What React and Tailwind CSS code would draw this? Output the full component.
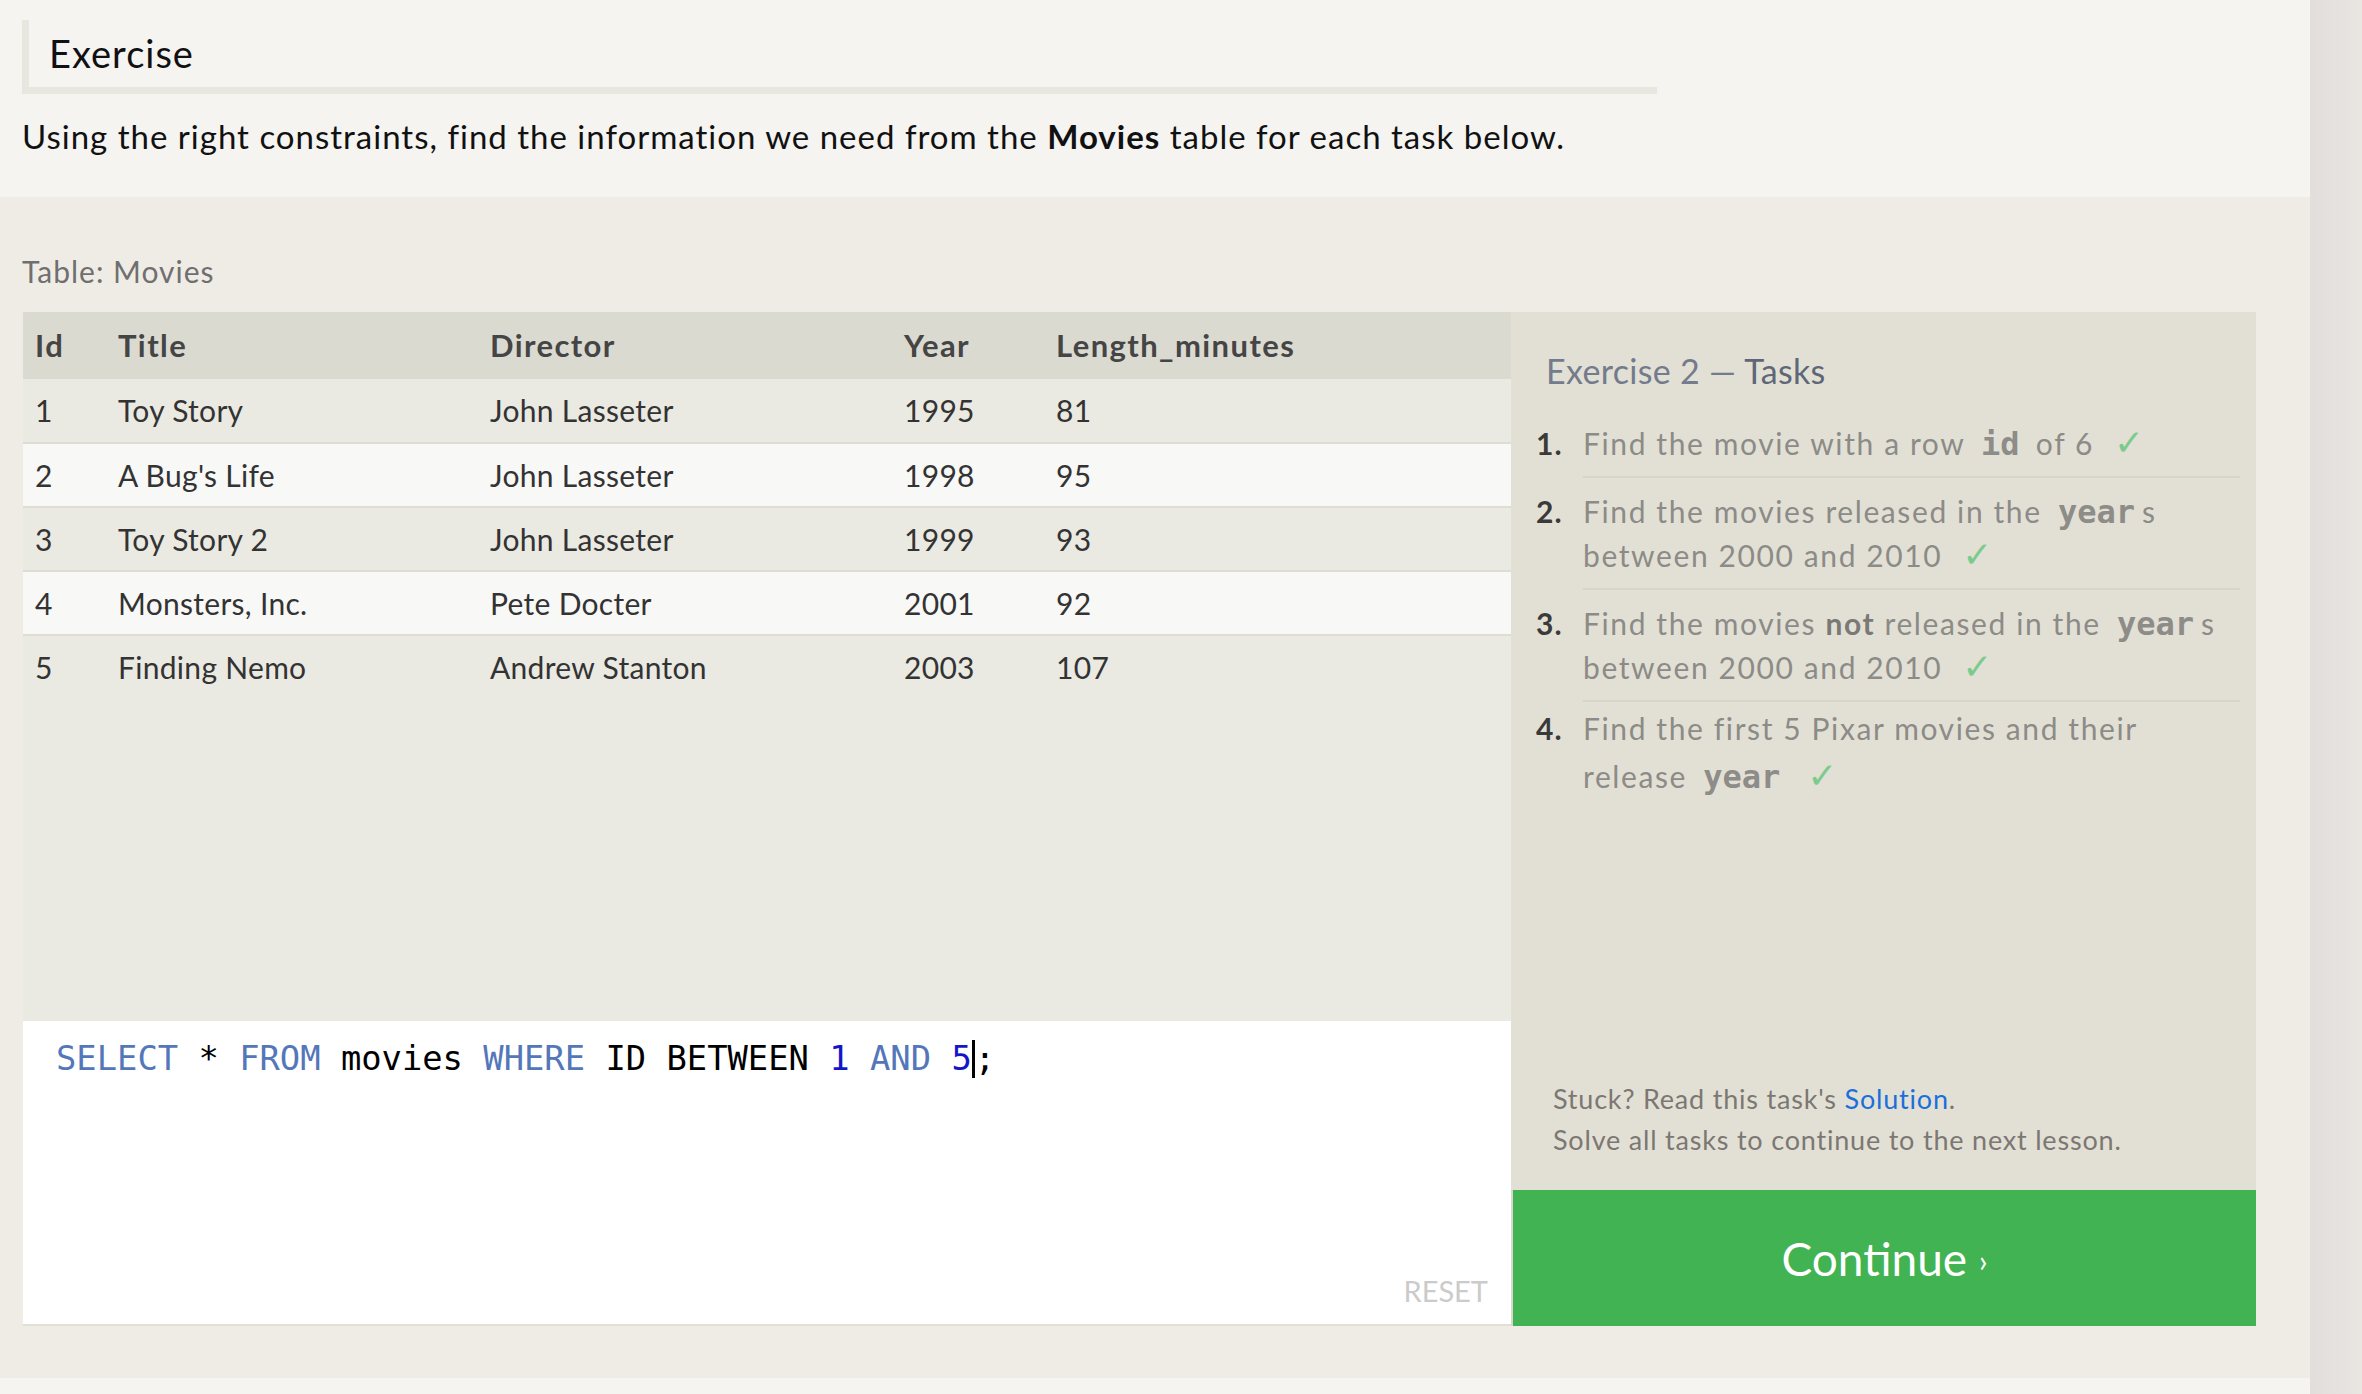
import React from "react";

const rows = [
  ["1", "Toy Story", "John Lasseter", "1995", "81"],
  ["2", "A Bug's Life", "John Lasseter", "1998", "95"],
  ["3", "Toy Story 2", "John Lasseter", "1999", "93"],
  ["4", "Monsters, Inc.", "Pete Docter", "2001", "92"],
  ["5", "Finding Nemo", "Andrew Stanton", "2003", "107"],
];

function Code({ children }) {
  return (
    <span className="font-[family-name:'DejaVu_Sans_Mono',monospace] font-bold text-[32px] leading-none tracking-normal text-[#8d8c88] px-[7px]">
      {children}
    </span>
  );
}

function Check() {
  return (
    <span className="text-[#7ccb8d] ml-[20px] font-[family-name:'DejaVu_Sans',sans-serif] text-[36px] leading-none tracking-normal">
      ✓
    </span>
  );
}

function Task({ n, children }) {
  return (
    <li className="flex">
      <span className="w-[47px] shrink-0 py-[11px] leading-[44px] text-[#3a3a3a] font-bold tracking-[1.2px]">{n}.</span>
      <div className="flex-1 py-[11px] leading-[44px] text-[#8c8b87] border-b-2 border-[#d7d5ca]">{children}</div>
    </li>
  );
}

const cols = "grid grid-cols-[83px_372px_414px_152px_1fr] pl-[12px] items-center";

export default function App() {
  return (
    <div className="min-h-screen flex bg-[#e6e2df] font-[family-name:Lato,sans-serif]">
      <div className="w-[2310px] flex flex-col">
        <header className="bg-[#f5f4f1] h-[197px] pl-[22px] pt-[20px]">
          <div className="w-[1635px] h-[74px] border-l-[7px] border-b-[7px] border-[#e8e7df] flex items-center pl-[20px] text-[38px] tracking-[1px] text-[#111]">
            Exercise
          </div>
          <p className="mt-[22px] text-[33px] tracking-[1px] leading-[40px] text-[#111]">
            Using the right constraints, find the information we need from the <b>Movies</b> table for each task below.
          </p>
        </header>

        <main className="bg-[#efece6] h-[1181px] pl-[22px] pt-[54px]">
          <div className="text-[30px] tracking-[1px] leading-[40px] text-[#6f6f6f]">Table: Movies</div>
          <div className="mt-[21px] ml-[1px] flex w-[2233px]">
            <div className="w-[1488px] flex flex-col">
              <div className="h-[709px] bg-[#eae9e2] flex flex-col text-[30px] tracking-[0.3px] text-[#333]">
                <div className={cols + " h-[67px] bg-[#dbdad0] font-bold text-[31px] tracking-[1.4px] text-[#454545]"}>
                  <span>Id</span>
                  <span>Title</span>
                  <span>Director</span>
                  <span>Year</span>
                  <span>Length_minutes</span>
                </div>
                {rows.map((r, i) => (
                  <div
                    key={i}
                    className={
                      cols +
                      " " +
                      (i === 0 ? "h-[63px] " : "h-[64px] border-t-2 border-[#dddcd5] ") +
                      (i % 2 === 1 ? "bg-[#f8f8f7]" : "bg-[#eae9e2]")
                    }
                  >
                    {r.map((c, j) => (
                      <span key={j}>{c}</span>
                    ))}
                  </div>
                ))}
              </div>
              <div className="h-[305px] bg-white border-b-2 border-[#e2dfd7] flex flex-col justify-between pl-[33px] pr-[23px] pt-[16px] pb-[13px]">
                <div className="font-[family-name:'DejaVu_Sans_Mono',monospace] text-[33.8px] leading-[44px] text-black whitespace-pre">
                  <span className="text-[#5477b9]">SELECT</span> * <span className="text-[#5477b9]">FROM</span> movies{" "}
                  <span className="text-[#5477b9]">WHERE</span> ID BETWEEN <span className="text-[#1515c8]">1</span>{" "}
                  <span className="text-[#5477b9]">AND</span> <span className="text-[#1515c8]">5</span>
                  <span className="inline-block w-[3px] h-[38px] bg-black align-middle -mt-[4px]"></span>;
                </div>
                <div className="self-end text-[29px] leading-[40px] text-[#cbcbcb]">RESET</div>
              </div>
            </div>

            <div className="w-[745px] flex flex-col">
              <div className="h-[878px] bg-[#e2e0d5] flex flex-col pl-[25px] pr-[16px] pt-[37px] pb-[30px] text-[30px] tracking-[1.6px]">
                <div className="pl-[10px] text-[34px] tracking-[0.3px] leading-[44px] text-[#737b8c]">
                  Exercise 2 — <span className="text-[#5e6777]">Tasks</span>
                </div>
                <ol className="mt-[17px]">
                  <Task n="1">
                    Find the movie with a row <Code>id</Code> of 6<Check />
                  </Task>
                  <Task n="2">
                    Find the movies released in the <Code>year</Code>s between 2000 and 2010<Check />
                  </Task>
                  <Task n="3">
                    Find the movies <b className="text-[#7a7975]">not</b> released in the <Code>year</Code>s between 2000 and 2010<Check />
                  </Task>
                  <li className="flex">
                    <span className="w-[47px] shrink-0 pt-[2px] leading-[48px] text-[#3a3a3a] font-bold tracking-[1.2px]">4.</span>
                    <div className="flex-1 pt-[2px] leading-[48px] text-[#8c8b87]">
                      Find the first 5 Pixar movies and their release <Code>year</Code>
                      <Check />
                    </div>
                  </li>
                </ol>
                <div className="mt-auto pl-[17px] text-[27px] tracking-[0.8px] leading-[41px] text-[#7c7773]">
                  <div>
                    Stuck? Read this task's <span className="text-[#1b6fdc]">Solution</span>.
                  </div>
                  <div>Solve all tasks to continue to the next lesson.</div>
                </div>
              </div>
              <div className="h-[136px] bg-[#41b353] border-l-2 border-[#d9d6cf] flex items-center justify-center text-white">
                <span className="text-[46px]">Continue</span>
                <span className="text-[30px] ml-[12px] mt-[4px]">›</span>
              </div>
            </div>
          </div>
        </main>
        <div className="flex-1 bg-[#f5f4f1]"></div>
      </div>
      <div className="flex-1 bg-gradient-to-r from-[#e2dedb] to-[#e9e5e1]"></div>
    </div>
  );
}
